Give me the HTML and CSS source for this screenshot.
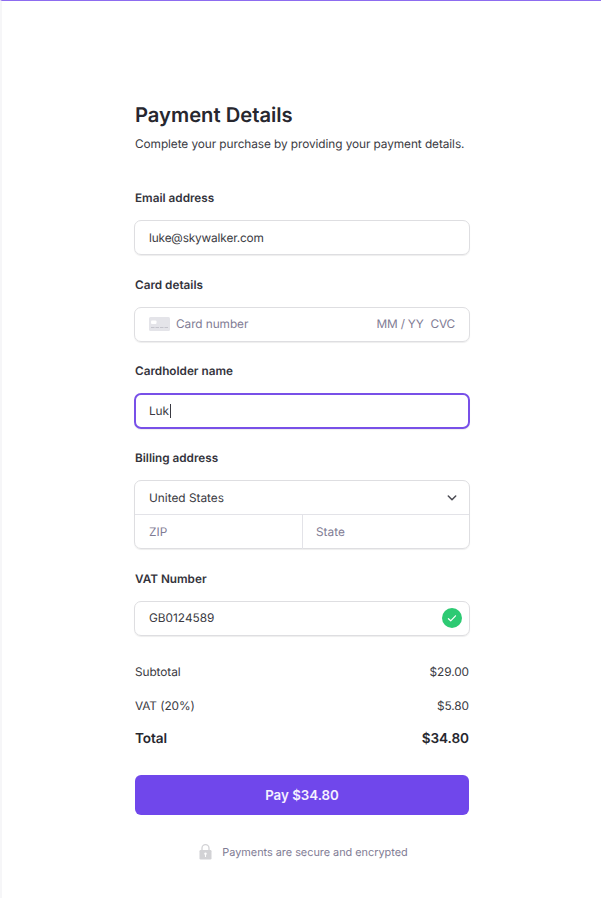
FILE: index.html
```html
<!DOCTYPE html>
<html lang="en"><head><meta charset="utf-8"><title>Payment Details</title><link rel="stylesheet" href="styles.css"></head>
<body><main class="page"><form class="checkout">
<h1>Payment Details</h1>
<p class="intro">Complete your purchase by providing your payment details.</p>
<section class="group"><h2>Email address</h2><div class="field email">luke@skywalker.com</div></section>
<section class="group"><h2>Card details</h2><div class="field muted"><svg class="card" viewBox="0 0 21 14" width="21" height="14"><rect width="21" height="14" rx="1.5" fill="#e4e4e9"/><rect x="2" y="3.5" width="5.5" height="3.5" rx="1" fill="#fff"/><path d="M2 10.5h17" stroke="#c4c4cc" stroke-dasharray="3.5 1"/></svg><span>Card number</span><span class="expiry">MM / YY</span><span class="cvc">CVC</span></div></section>
<section class="group"><h2>Cardholder name</h2><div class="field focused">Luk<i class="caret"></i></div></section>
<section class="group"><h2>Billing address</h2><div class="address"><div class="country">United States<svg width="10" height="6" viewBox="0 0 10 6"><path d="M1.3 1L5 4.7 8.7 1" fill="none" stroke="#4a4a52" stroke-width="1.5" stroke-linecap="round" stroke-linejoin="round"/></svg></div><div class="region muted"><span>ZIP</span><span>State</span></div></div></section>
<section class="group"><h2>VAT Number</h2><div class="field vat">GB0124589<svg width="20" height="20" viewBox="0 0 20 20"><circle cx="10" cy="10" r="10" fill="#2dca73"/><path d="M6.4 10.7l2.3 2.1 4.8-5" fill="none" stroke="#fff" stroke-width="1.2" stroke-linecap="round" stroke-linejoin="round"/></svg></div></section>
<div class="totals"><div><span>Subtotal</span><span>$29.00</span></div><div><span>VAT (20%)</span><span>$5.80</span></div><div class="total"><span>Total</span><span>$34.80</span></div></div>
<button type="button">Pay $34.80</button>
<div class="secure"><svg width="13" height="16" viewBox="0 0 13 16"><path d="M3 7V4.2a3.5 3.5 0 0 1 7 0V7" fill="none" stroke="#d2d2d5" stroke-width="1.3"/><rect x=".5" y="6" width="12" height="9.5" rx="1.2" fill="#d2d2d5"/><circle cx="6.5" cy="9.8" r="1.2" fill="#fff"/><path d="M6.5 10v3" stroke="#fff"/></svg><span>Payments are secure and encrypted</span></div>
</form></main></body></html>
```
FILE: styles.css
```css
* { box-sizing: border-box; }
body { margin: 0; background: #fff; color: #3a3a42; font: 11.85px/20px Inter, "Liberation Sans", sans-serif; letter-spacing: -.08px; text-rendering: geometricPrecision; }
.page { height: 898px; padding: 100px 132px 0 133px; border-top: 1px solid #8d6cf0; border-left: 2px solid #f6f6f8; overflow: hidden; }
.checkout { width: 334px; }
h1 { margin: 0; color: #27272f; font-size: 20.2px; line-height: 27px; font-weight: 600; letter-spacing: 0; }
.intro { margin: 6px 0 34px; white-space: nowrap; }
h2 { margin: 0 0 12px; color: #33333b; font-size: 11.75px; line-height: 20px; font-weight: 600; letter-spacing: 0; }
.group { margin-bottom: 19.7px; }
.field { height: 35px; display: flex; align-items: center; padding: 0 14px; border: 1px solid #dedee1; border-radius: 7px; box-shadow: 0 1px 1px #00000012; margin: 0 -1px; }
.email { letter-spacing: -.16px; }
.muted { color: #7f7c94; }
.card { margin-right: 6px; }
.expiry { margin-left: auto; letter-spacing: -.2px; }
.cvc { margin-left: 7px; letter-spacing: -.2px; }
.focused { height: 36px; margin-bottom: -1px; border: 2px solid #7850e8; padding: 0 13px; }
.caret { width: 1px; height: 14px; margin-left: 1px; background: #3a3a42; }
.address { height: 69px; margin: 0 -1px; border: 1px solid #dedee1; border-radius: 7px; box-shadow: 0 1px 1px #00000012; }
.country { height: 34px; display: flex; align-items: center; justify-content: space-between; padding: 0 12px 0 14px; border-bottom: 1px solid #e3e3e8; letter-spacing: 0; }
.region { height: 33px; display: grid; grid-template-columns: 167px 1fr; line-height: 34px; letter-spacing: 0; }
.region span { padding-left: 14px; }
.region span + span { padding-left: 13px; border-left: 1px solid #e3e3e8; }
.vat { justify-content: space-between; padding-right: 7px; letter-spacing: 0; }
.totals { padding-top: 7px; }
.totals div { display: flex; justify-content: space-between; margin-bottom: 13.4px; }
.totals .total { color: #27272f; font-size: 13.6px; font-weight: 600; letter-spacing: -.08px; }
button { width: 100%; height: 40px; border: 0; border-radius: 6px; background: #7047eb; color: #f5f0ff; font: 600 13.3px/20px Inter, "Liberation Sans", sans-serif; margin-top: 12px; }
.secure { display: flex; align-items: center; justify-content: center; gap: 10px; margin: 27px 0 0 3px; color: #7f7c94; font-size: 10.9px; letter-spacing: -.02px; }
```
